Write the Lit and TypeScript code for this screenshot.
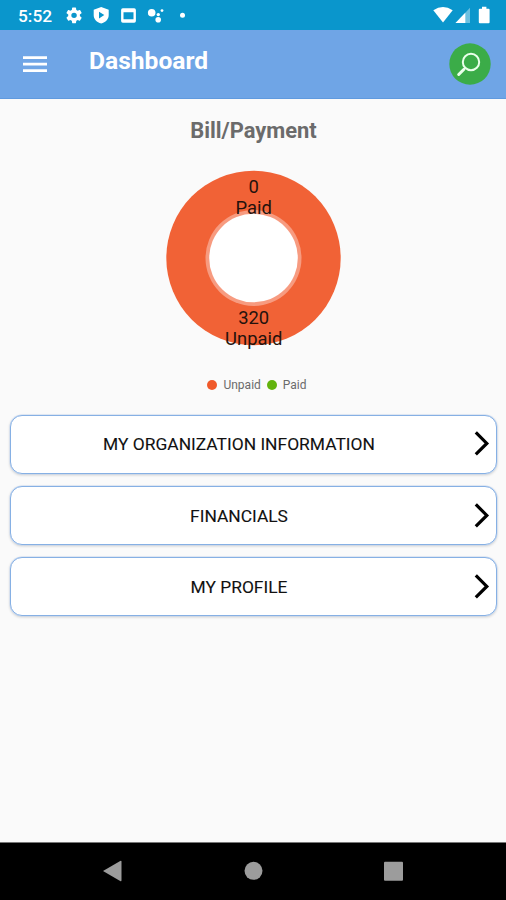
import { LitElement, html, css, svg } from "lit";
import { customElement, property } from "lit/decorators.js";

@customElement("status-bar")
class StatusBar extends LitElement {
  static styles = css`
    :host { display: flex; align-items: center; height: 30px; background: #0a96cc; color: #fff; box-sizing: border-box; padding-left: 18px; }
    .time { font: 500 17.3px/30px Roboto, sans-serif; width: 47px; padding-top: 2px; white-space: nowrap; }
    svg { display: block; fill: #fff; }
    .spacer { flex: 1; }
  `;
  render() {
    return html`
      <span class="time">5:52</span>
      <svg width="136" height="30" viewBox="65 0 136 30">
        <path transform="translate(64.7 6) scale(.78)" d="M19.43 12.98c.04-.32.07-.64.07-.98s-.03-.66-.07-.98l2.11-1.65a.5.5 0 0 0 .12-.64l-2-3.46a.5.5 0 0 0-.61-.22l-2.49 1a7.3 7.3 0 0 0-1.69-.98l-.38-2.65A.49.49 0 0 0 14 2h-4a.49.49 0 0 0-.49.42l-.38 2.65c-.61.25-1.17.59-1.69.98l-2.49-1a.49.49 0 0 0-.61.22l-2 3.46a.49.49 0 0 0 .12.64l2.11 1.65c-.04.32-.07.65-.07.98s.03.66.07.98l-2.11 1.65a.5.5 0 0 0-.12.64l2 3.46c.12.22.39.3.61.22l2.49-1c.52.4 1.08.73 1.69.98l.38 2.65c.03.24.24.42.49.42h4c.25 0 .46-.18.49-.42l.38-2.65c.61-.25 1.17-.59 1.69-.98l2.49 1c.23.09.49 0 .61-.22l2-3.46a.5.5 0 0 0-.12-.64zM12 15.5a3.5 3.5 0 1 1 0-7 3.5 3.5 0 0 1 0 7z"/>
        <path fill-rule="evenodd" d="M101.2 7l7.5 2.8v5.4c0 4-3.1 7-7.5 8.4-4.4-1.4-7.5-4.4-7.5-8.4V9.8zM99 11.8v6.6l5.3-3.3z"/>
        <path fill-rule="evenodd" d="M122.8 8.2h11.4a1.7 1.7 0 0 1 1.7 1.7v11.2a1.7 1.7 0 0 1-1.7 1.7h-11.4a1.7 1.7 0 0 1-1.7-1.7V9.9a1.7 1.7 0 0 1 1.7-1.7zM123.5 12.2v7h10v-7z"/>
        <circle cx="151.7" cy="12.7" r="3.8"/><circle cx="158.3" cy="14.6" r="1.7"/><circle cx="158.2" cy="19.7" r="2.8"/><circle cx="162" cy="10.6" r="1.4"/>
        <circle cx="182.5" cy="15.2" r="2.5"/>
      </svg>
      <span class="spacer"></span>
      <svg width="76" height="30" viewBox="430 0 76 30">
        <path d="M433.3 10.2Q443 3.6 452.7 10.2L443 22.4z"/>
        <path opacity=".4" d="M470 7.8V23h-14.5z"/>
        <path d="M465.3 12.7V23h-9.8z"/>
        <path d="M482 6.8h4.4v1.9h2.2q1 0 1 1v12.6q0 1-1 1h-8.8q-1 0-1-1V9.7q0-1 1-1h2.2z"/>
      </svg>`;
  }
}

@customElement("app-header")
class AppHeader extends LitElement {
  static styles = css`
    :host { display: flex; align-items: flex-start; height: 69px; background: #6fa5e6; border-bottom: 1px solid #5f9adf; box-sizing: border-box; padding: 0 15px 0 23px; color: #fff; }
    .menu { display: block; margin-top: 25px; fill: #fff; }
    h1 { margin: 16px 0 0 42px; flex: 1; font: 700 24.6px/30px Roboto, sans-serif; }
    .search { display: block; margin-top: 13px; }
  `;
  render() {
    return html`
      <svg class="menu" width="24" height="20" viewBox="0 0 24 20"><path d="M0 1.2h24v2.8H0zM0 7.8h24v2.8H0zM0 14.3h24v2.8H0z"/></svg>
      <h1>Dashboard</h1>
      <svg class="search" width="42" height="42" viewBox="0 0 42 42">
        <circle cx="21" cy="21" r="20.7" fill="#3bac48"/>
        <g fill="none" stroke="#eaffea"><circle cx="22" cy="19" r="8.2" stroke-width="2"/><path d="M16.2 25l-1.5 1.5" stroke-width="2"/><path d="M14.7 26.5l-5 5" stroke-width="3" stroke-linecap="round"/></g>
      </svg>`;
  }
}

@customElement("donut-chart")
class DonutChart extends LitElement {
  static styles = css`
    :host { display: flex; flex-direction: column; align-items: center; }
    .chart { display: block; overflow: visible; }
    text { font: 400 18.4px Roboto, sans-serif; fill: #24120d; text-anchor: middle; }
    .legend { display: flex; align-items: center; margin-top: 22px; height: 20px; font: 400 12px/20px Roboto, sans-serif; color: #6b6b6b; padding-left: 8px; }
    .dot { width: 10px; height: 10px; border-radius: 50%; margin-right: 6px; }
    .unpaid { background: #f0592a; }
    .paid { background: #62b30d; margin-left: 6px; }
  `;
  render() {
    return html`
      <svg class="chart" width="200" height="185" viewBox="153 168 200 185">
        <circle cx="253.5" cy="258" r="87.2" fill="#f16236"/>
        <circle cx="253.5" cy="258" r="48" fill="#f79b80"/>
        ${[["0", 193], ["Paid", 213.7], ["320", 323.7], ["Unpaid", 344.7]].map(
          ([t, y]) => svg`<text x="253.7" y=${y}>${t}</text>`
        )}
        <circle cx="253.5" cy="258" r="44.3" fill="#fff"/>
      </svg>
      <div class="legend"><i class="dot unpaid"></i>Unpaid<i class="dot paid"></i>Paid</div>`;
  }
}

@customElement("menu-row")
class MenuRow extends LitElement {
  @property() label = "";
  static styles = css`
    :host { display: flex; align-items: center; box-sizing: border-box; height: 58.7px; border: 1.5px solid #86b0e4; border-radius: 12px; background: #fff; box-shadow: 0 0 0 .5px #c9daf2, 0 1px 3px rgba(0,0,0,.2); padding-right: 6px; }
    .label { flex: 1; text-align: center; padding-right: 3px; font: 400 17.4px/24px Roboto, sans-serif; color: #111; -webkit-text-stroke: .1px #111; }
    svg { display: block; width: 20px; height: 28px; fill: none; stroke: #000; stroke-width: 3.2; }
  `;
  render() {
    return html`<span class="label">${this.label}</span>
      <svg viewBox="0 0 20 28"><path d="M5.8 2.4l11 11-11 11"/></svg>`;
  }
}

@customElement("app-root")
class AppRoot extends LitElement {
  static styles = css`
    :host { display: flex; flex-direction: column; height: 900px; background: #fafafa; font-family: Roboto, sans-serif; overflow: hidden; }
    main { flex: 1; display: flex; flex-direction: column; }
    h2 { margin: 17px 0 22px; padding-left: 1px; text-align: center; font: 700 21.9px/30px Roboto, sans-serif; color: #6b6b6b; }
    .rows { display: flex; flex-direction: column; gap: 12.5px; padding: 20px 9px 0 10px; }
    nav { height: 58px; background: #000; display: flex; justify-content: center; align-items: center; border-top: 1px solid #777; box-sizing: border-box; }
    nav svg { display: block; fill: #9c9c9c; }
  `;
  render() {
    return html`
      <status-bar></status-bar>
      <app-header></app-header>
      <main>
        <h2>Bill/Payment</h2>
        <donut-chart></donut-chart>
        <div class="rows">
          ${["MY ORGANIZATION INFORMATION", "FINANCIALS", "MY PROFILE"].map((l) => html`<menu-row label=${l}></menu-row>`)}
        </div>
      </main>
      <nav>
        <svg width="506" height="57" viewBox="0 843 506 57">
          <path d="M103 871l17.2-10q1.3-.7 1.3.8v18.4q0 1.5-1.3.8z"/>
          <circle cx="253.5" cy="870.8" r="9"/>
          <rect x="384" y="861.7" width="19" height="19" rx="1"/>
        </svg>
      </nav>`;
  }
}
